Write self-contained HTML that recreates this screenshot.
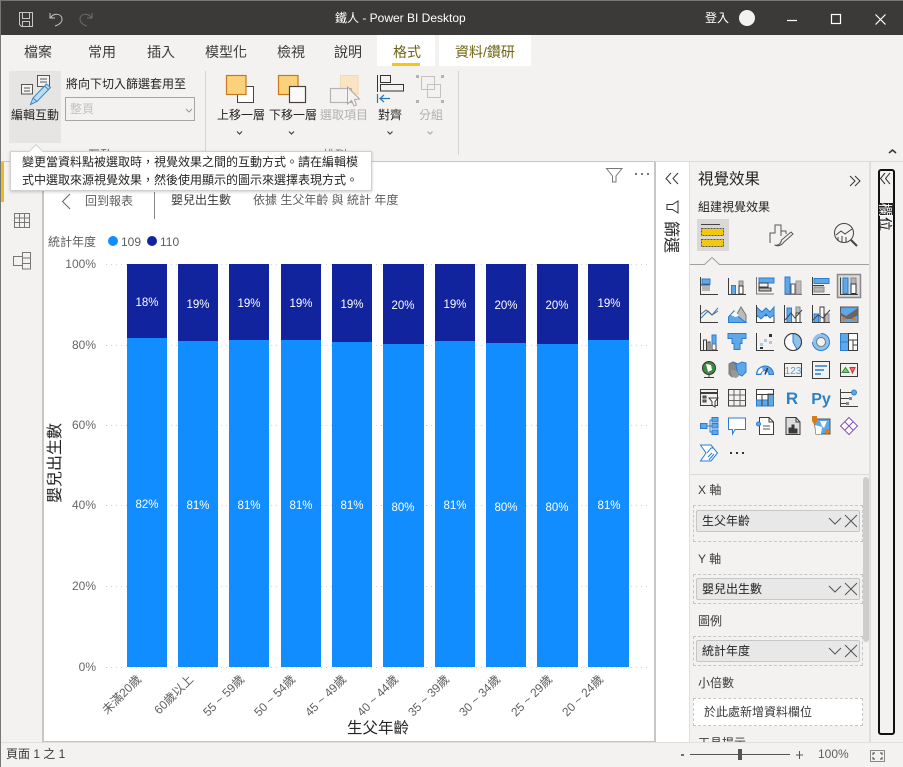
<!DOCTYPE html>
<html lang="zh-Hant">
<head>
<meta charset="utf-8">
<title>鐵人 - Power BI Desktop</title>
<style>
html,body{margin:0;padding:0;background:#f3f2f1;}
body{position:relative;width:903px;height:767px;overflow:hidden;font-family:"Liberation Sans","Noto Sans CJK TC",sans-serif;font-size:12px;color:#252423;}
div,span{position:absolute;box-sizing:border-box;}
.t{white-space:nowrap;line-height:16px;}
.tab{top:43px;font-size:14px;line-height:18px;color:#3b3a39;white-space:nowrap;}
.rl{top:108px;font-size:12px;line-height:15px;white-space:nowrap;color:#252423;}
.dis{color:#b3b0ad;}
.lab{left:698px;font-size:12px;line-height:16px;white-space:nowrap;color:#3b3a39;}
.well{left:693px;width:170px;border:1px dashed #c8c6c4;}
.pill{left:696px;width:164px;height:22px;background:#e8e8e8;border:1px solid #c8c6c4;border-radius:2px;font-size:12px;line-height:20px;padding-left:5px;color:#252423;white-space:nowrap;}
svg{position:absolute;left:0;top:0;}
</style>
</head>
<body>
<!-- title bar -->
<div style="left:0;top:0;width:903px;height:35px;background:#3b3a39;border-top:1px solid #777;"></div>
<div class="t" style="left:335px;top:10px;color:#fff;font-size:12px;">鐵人 - Power BI Desktop</div>
<div class="t" style="left:705px;top:10px;color:#fff;font-size:12px;">登入</div>

<!-- tabs -->
<div style="left:377px;top:35px;width:58px;height:31px;background:#fff;"></div>
<div style="left:439px;top:35px;width:92px;height:31px;background:#fff;"></div>
<div style="left:392px;top:63px;width:28px;height:3px;background:#f2c811;"></div>
<div class="tab" style="left:24px;">檔案</div>
<div class="tab" style="left:88px;">常用</div>
<div class="tab" style="left:147px;">插入</div>
<div class="tab" style="left:205px;">模型化</div>
<div class="tab" style="left:277px;">檢視</div>
<div class="tab" style="left:334px;">說明</div>
<div class="tab" style="left:393px;color:#6e6312;">格式</div>
<div class="tab" style="left:455px;color:#6e6312;">資料/鑽研</div>

<!-- ribbon -->
<div style="left:9px;top:71px;width:52px;height:72px;background:#e6e5e4;"></div>
<div class="rl" style="left:11px;">編輯互動</div>
<div class="t" style="left:66px;top:76px;">將向下切入篩選套用至</div>
<div style="left:65px;top:97px;width:130px;height:24px;border:1px solid #a6a6a6;font-size:12px;line-height:22px;padding-left:4px;color:#c4c2c0;">整頁</div>
<div class="rl" style="left:217px;">上移一層</div>
<div class="rl" style="left:269px;">下移一層</div>
<div class="rl dis" style="left:320px;">選取項目</div>
<div class="rl" style="left:378px;">對齊</div>
<div class="rl dis" style="left:419px;">分組</div>
<div style="left:0;top:161px;width:655px;height:1px;background:#c8c6c4;"></div>
<div style="left:655px;top:161px;width:248px;height:1px;background:#dcdad8;"></div>

<!-- left nav -->
<div style="left:1px;top:162px;width:3px;height:40px;background:#e6be1f;"></div>
<!-- canvas -->
<div style="left:43px;top:162px;width:612px;height:579px;background:#fff;"></div>
<div style="left:42px;top:162px;width:2px;height:579px;background:#c8c6c4;"></div>
<div style="left:654px;top:162px;width:2px;height:580px;background:#c8c6c4;"></div>
<div style="left:42px;top:741px;width:614px;height:2px;background:#c8c6c4;"></div>
<div style="left:656px;top:162px;width:33px;height:580px;background:#fff;"></div>

<div class="t" style="left:85px;top:193px;color:#605e5c;">回到報表</div>
<div style="left:154px;top:192px;width:1px;height:27px;background:#8a8886;"></div>
<div class="t" style="left:171px;top:192px;color:#3b3a39;">嬰兒出生數</div>
<div class="t" style="left:253px;top:192px;color:#605e5c;">依據 生父年齡 與 統計 年度</div>

<!-- chart -->
<svg width="903" height="767" viewBox="0 0 903 767" font-family="'Liberation Sans','Noto Sans CJK TC',sans-serif">
<g stroke="#d2d0ce" stroke-width="1" stroke-dasharray="1 4">
<path d="M106 264.500H648M106 345.500H648M106 425.500H648M106 505.500H648M106 586.500H648M106 667.500H648"/>
</g>
<text x="48" y="246" font-size="12" fill="#605e5c">統計年度</text>
<circle cx="113" cy="241" r="5" fill="#118dff"/>
<text x="121" y="246" font-size="12" fill="#605e5c">109</text>
<circle cx="152" cy="241" r="5" fill="#12239e"/>
<text x="160" y="246" font-size="12" fill="#605e5c">110</text>
<g font-size="12" fill="#666" text-anchor="end">
<text x="96" y="268">100%</text><text x="96" y="349">80%</text><text x="96" y="429">60%</text><text x="96" y="509">40%</text><text x="96" y="590">20%</text><text x="96" y="671">0%</text>
</g>
<g fill="#118dff">
<rect x="127" y="338" width="40" height="329"/><rect x="178" y="341" width="40" height="326"/><rect x="229" y="340" width="40" height="327"/><rect x="281" y="340" width="40" height="327"/><rect x="332" y="342" width="40" height="325"/><rect x="383" y="344" width="41" height="323"/><rect x="435" y="341" width="40" height="326"/><rect x="486" y="343" width="40" height="324"/><rect x="537" y="344" width="41" height="323"/><rect x="588" y="340" width="41" height="327"/>
</g>
<g fill="#12239e">
<rect x="127" y="264" width="40" height="74"/><rect x="178" y="264" width="40" height="77"/><rect x="229" y="264" width="40" height="76"/><rect x="281" y="264" width="40" height="76"/><rect x="332" y="264" width="40" height="78"/><rect x="383" y="264" width="41" height="80"/><rect x="435" y="264" width="40" height="77"/><rect x="486" y="264" width="40" height="79"/><rect x="537" y="264" width="41" height="80"/><rect x="588" y="264" width="41" height="76"/>
</g>
<g font-size="11.500" fill="#fff" text-anchor="middle">
<text x="147" y="306">18%</text><text x="198" y="308">19%</text><text x="249" y="307">19%</text><text x="301" y="307">19%</text><text x="352" y="308">19%</text><text x="403" y="309">20%</text><text x="455" y="308">19%</text><text x="506" y="309">20%</text><text x="557" y="309">20%</text><text x="609" y="307">19%</text>
<text x="147" y="508">82%</text><text x="198" y="509">81%</text><text x="249" y="509">81%</text><text x="301" y="509">81%</text><text x="352" y="509">81%</text><text x="403" y="511">80%</text><text x="455" y="509">81%</text><text x="506" y="511">80%</text><text x="557" y="511">80%</text><text x="609" y="509">81%</text>
</g>
<g font-size="12" fill="#605e5c" text-anchor="end">
<text transform="translate(142,680) rotate(-45)">未滿20歲</text>
<text transform="translate(194,680) rotate(-45)">60歲以上</text>
<text transform="translate(245,680) rotate(-45)">55 ~ 59歲</text>
<text transform="translate(296,680) rotate(-45)">50 ~ 54歲</text>
<text transform="translate(347,680) rotate(-45)">45 ~ 49歲</text>
<text transform="translate(399,680) rotate(-45)">40 ~ 44歲</text>
<text transform="translate(450,680) rotate(-45)">35 ~ 39歲</text>
<text transform="translate(501,680) rotate(-45)">30 ~ 34歲</text>
<text transform="translate(553,680) rotate(-45)">25 ~ 29歲</text>
<text transform="translate(604,680) rotate(-45)">20 ~ 24歲</text>
</g>
<text x="378" y="733" font-size="15.500" fill="#252423" text-anchor="middle">生父年齡</text>
<text transform="translate(60,463) rotate(-90)" font-size="16" fill="#252423" text-anchor="middle">嬰兒出生數</text>

<!-- title bar icons -->
<g fill="none" stroke="#c8c6c4" stroke-width="1">
<path d="M19.500 12.500H32.500V26.500H21.500L19.500 24.500Z M22.500 12.500V18.500H29.500V12.500 M22.500 26.500V21.500H29.500V26.500"/>
<path d="M50 13V18H55 M50.500 18C53 13 61 13 62 18.500C62.500 22 59 25 55 26" />
<path stroke="#6f6e6d" d="M92 13V18H87 M91.500 18C89 13 81 13 80 18.500C79.500 22 83 25 87 26"/>
</g>
<circle cx="747" cy="18" r="8" fill="#f3f2f1"/>
<g fill="none" stroke="#fff" stroke-width="1.200">
<path d="M787 20.500H797"/><rect x="831.500" y="14.500" width="9" height="9"/><path d="M875.500 14.500L885.500 24.500M885.500 14.500L875.500 24.500"/>
</g>

<!-- edit interaction icon -->
<g fill="#f3f2f1" stroke="#555" stroke-width="1">
<rect x="21.500" y="84.500" width="11" height="9.500"/><path d="M24 88H30M24 91H30" fill="none"/>
<rect x="37.500" y="75.500" width="12" height="11"/><path d="M40 79H47M40 82H47" fill="none"/>
</g>
<path d="M30.500 104.500L33 98L46.500 84L50.500 87.500L37 101.500Z" fill="#bcdcf3" stroke="#3d87c4" stroke-width="1"/>
<path d="M33 98L37 101.500M44.500 86L48.500 89.500" fill="none" stroke="#3d87c4"/>
<!-- dropdown chevrons -->
<g fill="none" stroke="#9a9896" stroke-width="1"><path d="M186 109L189 112L192 109"/></g>
<g fill="none" stroke="#444" stroke-width="1.200">
<path d="M237 131.500L239.500 134L242 131.500M289 131.500L291.500 134L294 131.500M387.500 131.500L390 134L392.500 131.500"/>
</g>
<path d="M427.500 131.500L430 134L432.500 131.500" fill="none" stroke="#aaa" stroke-width="1.200"/>
<path d="M205.500 71V155M458.500 71V155" stroke="#d6d4d2"/>
<text x="100" y="159" font-size="12" fill="#555" text-anchor="middle">互動</text>
<text x="335" y="159" font-size="12" fill="#777" text-anchor="middle">排列</text>
<!-- arrange icons -->
<rect x="237.500" y="86.500" width="16" height="16" fill="#fff" stroke="#444"/>
<rect x="226.500" y="75.500" width="19.500" height="19" fill="#fbd27c" stroke="#c6781c" stroke-width="1.200"/>
<rect x="278.500" y="75.500" width="19.500" height="19" fill="#fbd27c" stroke="#c6781c" stroke-width="1.200"/>
<rect x="289.500" y="86.500" width="16" height="16" fill="#fafafa" stroke="#444" stroke-width="1.200"/>
<rect x="340.500" y="75.500" width="17.500" height="19" fill="#fbe4c3" stroke="#f1d9b4"/>
<rect x="330.500" y="88.500" width="21" height="14" fill="#f3f2f1" stroke="#b5b3b1" stroke-width="1.200"/>
<path d="M347.500 87V104L351.500 100.500L354 106L356.500 105L354.500 99.500L359.500 99Z" fill="#f3f2f1" stroke="#aaa8a6"/>
<g fill="none" stroke="#333">
<path d="M377.500 75V92"/><rect x="380.500" y="75.500" width="10" height="7"/><rect x="380.500" y="84.500" width="23" height="6.500"/>
</g>
<path d="M377.500 94V103" stroke="#2376b7" stroke-width="1.200"/>
<path d="M390 98.500H380M384 95L380 98.500L384 102" fill="none" stroke="#2376b7" stroke-width="1.200"/>
<g fill="none" stroke="#c4c2c0">
<rect x="421.500" y="76.500" width="13" height="13"/><rect x="427.500" y="84.500" width="13" height="13"/>
</g>
<g fill="#b5b3b1"><rect x="416" y="75" width="3" height="3"/><rect x="441" y="75" width="3" height="3"/><rect x="416" y="100" width="3" height="3"/><rect x="441" y="100" width="3" height="3"/></g>
<path d="M889 153L892.500 150L896 153" fill="none" stroke="#333" stroke-width="1.500"/>

<!-- left nav icons -->
<g fill="none" stroke="#777" stroke-width="1">
<rect x="14.500" y="213.500" width="15" height="14"/><path d="M14.500 218H29.500M14.500 222.500H29.500M19.500 213.500V227.500M24.500 213.500V227.500"/>
<rect x="13.500" y="256.500" width="9" height="9"/><rect x="22.500" y="252.500" width="8" height="5.500"/><rect x="22.500" y="258" width="8" height="5.500"/><rect x="22.500" y="263.500" width="8" height="5.500"/>
</g>
<path d="M70 194L62.500 201.500L70 209" fill="none" stroke="#666"/>
<path d="M606.500 168.500H622L616 176V182H612.500V176Z" fill="none" stroke="#777"/>
<g fill="#777"><rect x="635" y="173" width="2" height="2"/><rect x="641" y="173" width="2" height="2"/><rect x="647" y="173" width="2" height="2"/></g>

<!-- filter pane -->
<path d="M671 173L666 178.500L671 184M678 173L673 178.500L678 184" fill="none" stroke="#333"/>
<path d="M667 204.500H672.500L678 201V213L672.500 209.500H667Z" fill="none" stroke="#333"/>
<text transform="translate(666,221) rotate(90)" font-size="16" fill="#252423">篩選</text>

<!-- viz pane borders -->
<path d="M689.500 162V742M869.500 162V742" stroke="#e1dfdd"/>
<path d="M690 264.500H704.500L712 257.500L719.500 264.500H869" fill="#f3f2f1" stroke="#a19f9d"/>
<path d="M690 474.500H869" stroke="#dcdad8"/>
<path d="M850 176L855 181L850 186M855 176L860 181L855 186" fill="none" stroke="#333"/>
<rect x="697" y="219" width="32" height="32" fill="#d9d8d7"/>
<path d="M701 224.500H720" stroke="#444"/>
<g fill="#f2c811" stroke="#555" stroke-dasharray="2 1"><rect x="701.500" y="228.500" width="22" height="7"/><rect x="701.500" y="239.500" width="22" height="7"/></g>
<g fill="none" stroke="#555">
<path d="M770 243V233H775V225H781V236M781 231H786V234"/>
<path d="M774.500 245C779 246 781 243 781.500 240L791 232L793 234L784 242C782 245 778 247 774.500 245Z" fill="#f3f2f1"/>
</g>
<g fill="none" stroke="#444">
<circle cx="844" cy="233" r="9.500"/><path d="M851 240L857 246" stroke-width="2"/><path d="M836 235L841 231L845 234L852 229" /><path d="M838 237V241M842 236V242M846 237V242"/>
</g>

<!-- viz icons -->
<rect x="837.500" y="274.500" width="23" height="23" fill="#dbdad9" stroke="#8a8886" stroke-width="1.500"/>
<g fill="none" stroke="#3c3c3c" stroke-width="1">
<!-- row1 -->
<g transform="translate(700,277)"><rect x="2" y="2" width="8" height="5" fill="#5fa8e8" stroke="#2b7cd3"/><rect x="2" y="9" width="8" height="5" fill="#b5b5b5" stroke="none"/><path d="M.5 0V17.500H18"/><path d="M.5 8H10"/></g>
<g transform="translate(728,277)"><rect x="3.500" y="8.500" width="4" height="9" fill="#5fa8e8" stroke="#2b7cd3"/><rect x="11" y="4" width="4" height="5" fill="#b5b5b5" stroke="#888"/><rect x="11" y="9" width="4" height="8" fill="#fff" stroke="#333"/><path d="M.5 1V17.500H18"/></g>
<g transform="translate(756,276)"><rect x="3" y="2" width="15" height="5" fill="#5fa8e8" stroke="#2b7cd3"/><rect x="3" y="7" width="9" height="4" fill="#f3f2f1"/><rect x="3" y="12" width="12" height="3" fill="#bbb"/><path d="M.5 1V18H18" stroke="#777"/></g>
<g transform="translate(784,277)"><rect x="1" y="0" width="5" height="17" fill="#5fa8e8" stroke="#2b7cd3"/><rect x="7" y="7" width="4" height="10" fill="#fff" stroke="#555"/><rect x="12" y="4" width="5" height="13" fill="#bbb" stroke="#999"/><path d="M.5 17.500H18" stroke="#777"/></g>
<g transform="translate(812,277)"><rect x="2" y="1.500" width="15" height="5" fill="#5fa8e8" stroke="#2b7cd3"/><rect x="2" y="10" width="10" height="5" fill="#b5b5b5" stroke="#888"/><path d="M.5 0V17.500H18"/><path d="M.5 8.500H12"/></g>
<g transform="translate(840,277)"><rect x="3" y="1" width="5" height="15.500" fill="#5fa8e8" stroke="#2b7cd3"/><rect x="11" y="1" width="5" height="6" fill="#b5b5b5" stroke="#888"/><rect x="11" y="7" width="5" height="9.500" fill="#fff" stroke="#333"/><path d="M.5 .5V17.500H18"/></g>
<!-- row2 -->
<g transform="translate(700,305)"><path d="M.5 0V17.500H18"/><path d="M1 13L8 6L12 10L18 3" stroke="#2b7cd3"/><path d="M1 9L6 5L12 10L18 6" stroke="#666"/></g>
<g transform="translate(728,305)"><path d="M.5 17.500V13L6 6L9 9L13 2L18 10V17.500Z" fill="#bbb" stroke="#777"/><path d="M.5 17.500V12L6 6L12 13L18 17.500Z" fill="#5fa8e8" stroke="#2b7cd3"/><path d="M3 10L7 6L11 11L7 12Z" fill="#fff" stroke="none"/></g>
<g transform="translate(756,305)"><path d="M.5 2V12L6 7L10 11L18 3V17.500H.5Z" fill="#fff"/><path d="M.5 2L6 7L10 3L14 7L18 2V10L14 13L10 9L5 14L.5 10Z" fill="#5fa8e8" stroke="#2b7cd3"/><path d="M.5 0V17.500H18"/></g>
<g transform="translate(784,305)"><rect x="3" y="3" width="4.500" height="14.500" fill="#5fa8e8" stroke="#2b7cd3"/><rect x="12" y="2" width="4" height="6" fill="#bbb" stroke="#888"/><rect x="12" y="8" width="4" height="9.500" fill="#fff"/><path d="M.5 0V17.500H18"/><path d="M1 15L7 8L11 13L18 5" stroke="#444"/></g>
<g transform="translate(812,305)"><rect x="2" y="9" width="4.500" height="8.500" fill="#5fa8e8" stroke="#2b7cd3"/><rect x="8" y="2" width="4" height="15.500" fill="#fff"/><rect x="13" y="9" width="4" height="8.500" fill="#bbb" stroke="#888"/><path d="M.5 0V17.500H18"/><path d="M1 15L6 10L11 13L18 5" stroke="#444"/></g>
<g transform="translate(840,305)"><path d="M.5 2H18V17.500H.5Z" fill="#5fa8e8" stroke="#555"/><path d="M0 7L6 11L12 7L18 3V10L12 14L6 14L0 10Z" fill="#666" stroke="none"/><circle cx="4" cy="14" r="1.800" fill="#d97b1c" stroke="none"/><circle cx="14" cy="14" r="1.800" fill="#d97b1c" stroke="none"/></g>
<!-- row3 -->
<g transform="translate(700,333)"><path d="M.5 0V17.500H18"/><path d="M3.500 17V7H6.500V17M8 17V9H10V17"/><rect x="12" y="2" width="4" height="15" fill="#fff"/><rect x="12" y="2" width="4" height="9" fill="#5fa8e8" stroke="#2b7cd3"/></g>
<g transform="translate(728,333)"><path d="M0 .5H18V5.500H14V10.500H12V16.500H6V10.500H4V5.500H0Z" fill="#5fa8e8" stroke="#2b7cd3"/></g>
<g transform="translate(756,333)"><path d="M.5 0V17.500H18"/><g stroke="none"><rect x="13" y="1" width="3" height="3" fill="#333"/><rect x="8" y="6" width="3" height="3" fill="#a4cbe9"/><rect x="13" y="8" width="3" height="3" fill="#a4cbe9"/><rect x="4" y="10" width="3" height="3" fill="#a4cbe9"/><rect x="4" y="14" width="3" height="2" fill="#333"/></g></g>
<g transform="translate(784,333)"><circle cx="9" cy="9" r="8.500" fill="#fff"/><path d="M9 9V.5A8.500 8.500 0 0 1 13 16.500Z" fill="#8fc3ea" stroke="#2b7cd3"/><circle cx="9" cy="9" r="8.500"/></g>
<g transform="translate(812,333)"><circle cx="9" cy="9" r="6.500" stroke="#8fc3ea" stroke-width="4"/><path d="M9 .5A8.500 8.500 0 1 1 .5 9" stroke="#2b7cd3"/><circle cx="9" cy="9" r="4.500" fill="#f3f2f1" stroke="#777"/></g>
<g transform="translate(840,333)"><rect x=".5" y=".5" width="8" height="17" fill="#5fa8e8" stroke="#2b7cd3"/><path d="M.5 9H8.500" stroke="#2b7cd3"/><rect x="8.500" y=".5" width="9" height="17" fill="#fff"/><path d="M8.500 7H17.500M13 7V17.500M13 12H17.500"/></g>
<!-- row4 -->
<g transform="translate(700,361)"><circle cx="9" cy="7" r="6.500" fill="#3d8b40" stroke="#333"/><path d="M6 3L11 4L12 9L8 11ZM1 7L4 9" fill="#fff" stroke="none"/><path d="M4 16.500H14M9 14V17" /></g>
<g transform="translate(728,361)"><path d="M1 3L5 1L8 3L9 9L7 14L4 16L1 13Z" fill="#888" stroke="#777"/><path d="M5 1L10 3L14 1L18 2V11L14 15L10 13L9 9L8 3Z" fill="#5fa8e8" stroke="#2b7cd3"/><path d="M3 9L9 10L11 15L8 17L4 16Z" fill="#999" stroke="none"/></g>
<g transform="translate(756,361)"><path d="M.5 13.500A8.500 8.500 0 0 1 17.500 13.500H13A4 4 0 0 0 5 13.500Z" fill="#5fa8e8" stroke="#2b7cd3"/><path d="M1.500 12.500A7.500 7.500 0 0 1 6 6.500L7 10A4 4 0 0 0 4.500 12.500Z" fill="#fff" stroke="none"/><path d="M9 13.500L11.500 7" stroke="#333" stroke-width="1.500"/></g>
<g transform="translate(784,361)"><rect x=".5" y="2.500" width="17" height="13"/></g>
<g transform="translate(812,361)"><rect x=".5" y=".5" width="17" height="17"/><path d="M3 5H15M3 9H12M3 13H9" stroke="#2b7cd3" stroke-width="1.500"/></g>
<g transform="translate(840,361)"><rect x=".5" y="2.500" width="17" height="13"/><path d="M2 11.500L5.500 6.500L9 11.500Z" fill="#7cc47f" stroke="#3d8b40"/><path d="M10 6.500H15L12.500 12Z" fill="#e77" stroke="#c33"/></g>
<!-- row5 -->
<g transform="translate(700,389)"><rect x=".5" y=".5" width="17" height="16"/><path d="M.5 4H17.500" stroke-width="2"/><path d="M3 7H6V9H3ZM3 11H6V13H3Z" fill="#888"/><path d="M9 9H18L15 12.500V18L12 16V12.500Z" fill="#fff"/></g>
<g transform="translate(728,389)"><rect x=".5" y=".5" width="17" height="16.500"/><path d="M.5 6H17.500M.5 11.500H17.500M6 .5V17M12 .5V17" stroke="#666"/></g>
<g transform="translate(756,389)"><rect x=".5" y=".5" width="17" height="16.500" fill="#fff"/><rect x=".5" y="11" width="17" height="6" fill="#5fa8e8" stroke="#2b7cd3"/><rect x="12" y="5" width="5.500" height="12" fill="#5fa8e8" stroke="#2b7cd3"/><path d="M.5 .5H17.500V5.500H.5ZM6 5V17M12 5V17" /></g>
<g transform="translate(840,389)"><path d="M.5 0V17.500H18" stroke="#444"/><path d="M0 3.500H12M0 9.500H9M0 14.500H7" stroke="#444"/><circle cx="14" cy="3.500" r="2.500" fill="#5fa8e8" stroke="#2b7cd3"/><rect x="9" y="8" width="3" height="3" fill="#888" stroke="none"/><rect x="6" y="13" width="3" height="3" fill="#888" stroke="none"/></g>
<!-- row6 -->
<g transform="translate(700,417)" stroke="#2b7cd3"><rect x=".5" y="6.500" width="6.500" height="5" fill="#5fa8e8"/><rect x="12" y=".5" width="6" height="4.500" fill="#5fa8e8"/><rect x="12" y="6.500" width="6" height="4.500" fill="#5fa8e8"/><rect x="12" y="13" width="6" height="4.500" fill="#5fa8e8"/><path d="M7 9H10M10 3V15H12M10 3H12M10 9H12"/></g>
<g transform="translate(728,417)" stroke="#2b7cd3"><path d="M.5 1H17.500V12.500H7L4.500 17V12.500H.5Z" fill="#fff"/></g>
<g transform="translate(756,417)"><path d="M3.500 .5H13L17.500 5V17.500H3.500Z" fill="#fff"/><path d="M13 .5V5H17.500"/><path d="M7 9H14M7 12H14" stroke="#555"/><circle cx="2.500" cy="7" r="2" fill="#5fa8e8" stroke="#2b7cd3"/></g>
<g transform="translate(784,417)"><path d="M2 .5H12L16 5V17.500H2Z" fill="#ddd"/><path d="M12 .5V5H16"/><rect x="5" y="11" width="2" height="5" fill="#333"/><rect x="8" y="8" width="2" height="8" fill="#333"/><rect x="11" y="12" width="2" height="4" fill="#333"/></g>
<g transform="translate(812,417)"><path d="M2 2H18V17H4Z" fill="#5fa8e8" stroke="#555"/><path d="M3 8L10 10L9 17L4 17Z" fill="#fff" stroke="none"/><path d="M8 4H15L12 11L10 9Z" fill="#fff" stroke="none"/><path d="M0 -1H5V4L2.500 8L0 4Z" fill="#d97b1c" stroke="none"/><circle cx="15.500" cy="14.500" r="2.500" fill="#d97b1c" stroke="none"/></g>
<g transform="translate(840,417)" stroke="#8a4fb0"><path d="M9 .5L17.500 9L9 17.500L.5 9Z" fill="#fff"/><path d="M5 5L13 13M13 5L5 13"/></g>
<!-- row7 -->
<g transform="translate(700,444)" stroke="#2b7cd3"><path d="M.5 1H11L17.500 9L11 17H.5L6 9Z" fill="#fff"/><path d="M7 9L11 4H14M8 13L12 9M9 16L14 10" /></g>
</g>
<g fill="#333"><rect x="730" y="452" width="2" height="2"/><rect x="736" y="452" width="2" height="2"/><rect x="742" y="452" width="2" height="2"/></g>
<text x="793" y="374" font-size="10" fill="#5aa0d8" text-anchor="middle">123</text>
<text x="792" y="404" font-size="17" font-weight="bold" fill="#2d82c4" text-anchor="middle">R</text>
<text x="821" y="404" font-size="16" font-weight="bold" fill="#2d82c4" text-anchor="middle">Py</text>
</svg>

<!-- viz pane text -->
<div class="t" style="left:698px;top:171px;font-size:15.500px;line-height:18px;color:#252423;">視覺效果</div>
<div class="t" style="left:698px;top:199px;color:#252423;">組建視覺效果</div>

<!-- scrollbar -->
<div style="left:863px;top:477px;width:6px;height:165px;background:#cdcdcd;border-radius:3px;"></div>

<!-- wells -->
<div class="lab" style="top:482px;">X 軸</div>
<div class="well" style="top:505px;height:37px;"></div>
<div class="pill" style="top:510px;">生父年齡</div>
<div class="lab" style="top:551px;">Y 軸</div>
<div class="well" style="top:574px;height:30px;"></div>
<div class="pill" style="top:578px;">嬰兒出生數</div>
<div class="lab" style="top:613px;">圖例</div>
<div class="well" style="top:636px;height:30px;"></div>
<div class="pill" style="top:640px;">統計年度</div>
<div class="lab" style="top:675px;">小倍數</div>
<div class="well" style="top:698px;height:28px;background:#fff;font-size:12px;line-height:26px;padding-left:10px;color:#3b3a39;white-space:nowrap;">於此處新增資料欄位</div>
<div class="lab" style="top:735px;">工具提示</div>

<!-- right collapsed pane -->
<div style="left:870px;top:162px;width:33px;height:580px;background:#f3f2f1;border-left:1px solid #e1dfdd;"></div>
<div style="left:878px;top:169px;width:17px;height:566px;border:2px solid #111;border-radius:3px;"></div>
<svg width="903" height="767" viewBox="0 0 903 767">
<path d="M885 173L880.500 178.500L885 184M890 173L885.500 178.500L890 184" fill="none" stroke="#333"/>
<rect x="879" y="203" width="15" height="12" fill="#222"/>
<text transform="translate(880,203) rotate(90)" font-size="14" fill="#fff" font-family="'Liberation Sans','Noto Sans CJK TC',sans-serif">欄</text>
<text transform="translate(880,217) rotate(90)" font-size="14" fill="#111" font-family="'Liberation Sans','Noto Sans CJK TC',sans-serif">位</text>
<!-- well icons -->
<g fill="none" stroke="#555" stroke-width="1">
<path d="M829 518L835 524L841 518M845 515L857 527M857 515L845 527"/>
<path d="M829 586L835 592L841 586M845 583L857 595M857 583L845 595"/>
<path d="M829 648L835 654L841 648M845 645L857 657M857 645L845 657"/>
</g>
</svg>

<!-- status bar -->
<div style="left:0;top:743px;width:903px;height:24px;background:#f3f2f1;"></div>
<div style="left:0;top:742px;width:903px;height:1px;background:#e1dfdd;"></div>
<div class="t" style="left:6px;top:746px;color:#3b3a39;">頁面 1 之 1</div>
<div class="t" style="left:818px;top:746px;color:#605e5c;">100%</div>
<svg width="903" height="767" viewBox="0 0 903 767">
<path d="M681 755H684" stroke="#444" stroke-width="1.500"/>
<path d="M690 754.500H790" stroke="#555"/>
<rect x="738" y="749" width="4" height="11" fill="#555"/>
<path d="M796 755H803M799.500 751V759" stroke="#555"/>
<rect x="870.500" y="750.500" width="14" height="11" fill="none" stroke="#888"/>
<path d="M873 755V753H875M880 753H882V755M882 757V759H880M875 759H873V757" fill="none" stroke="#444"/>
<path d="M.5 0V767" stroke="#777"/>
</svg>

<!-- tooltip -->
<div style="left:10px;top:151px;width:362px;height:40px;background:#fff;border:1px solid #d2d0ce;box-shadow:0 1px 3px rgba(0,0,0,.2);"></div>
<div style="left:31px;top:146px;width:10px;height:10px;background:#fff;transform:rotate(45deg);border-left:1px solid #d2d0ce;border-top:1px solid #d2d0ce;"></div>
<div style="left:22px;top:153px;width:345px;font-size:12px;line-height:18px;color:#252423;white-space:nowrap;">變更當資料點被選取時，視覺效果之間的互動方式。請在編輯模<br>式中選取來源視覺效果，然後使用顯示的圖示來選擇表現方式。</div>
</body>
</html>
